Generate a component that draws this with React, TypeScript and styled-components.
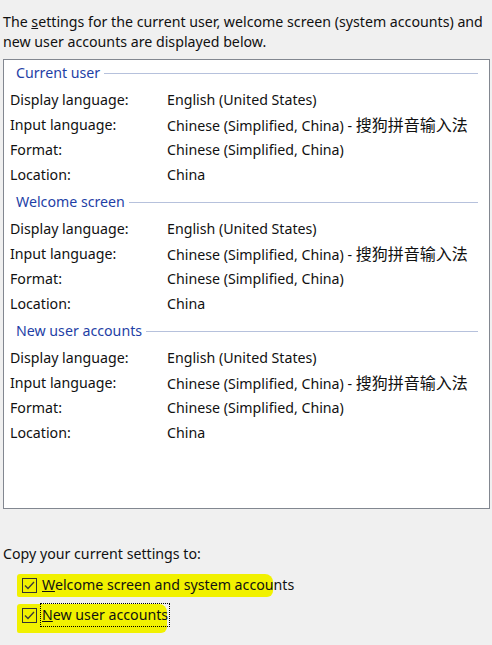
import styled, { createGlobalStyle } from "styled-components";

// ── palette ──────────────────────────────────────────────────────────────────
const FACE = "#F0F0F0";
const PANEL_BORDER = "#828790";
const GROUP_BLUE = "#1F3FA6";
const GROUP_LINE = "#B6C1DC";
const TEXT = "#111111";
const MARKER = "#F1F100";

type Row = { label: string; value: string; ime?: string };

const SECTIONS: { title: string; rows: Row[] }[] = [
  "Current user",
  "Welcome screen",
  "New user accounts",
].map(title => ({
  title,
  rows: [
    { label: "Display language:", value: "English (United States)" },
    { label: "Input language:", value: "Chinese (Simplified, China) - ", ime: "搜狗拼音输入法" },
    { label: "Format:", value: "Chinese (Simplified, China)" },
    { label: "Location:", value: "China" },
  ],
}));

const Global = createGlobalStyle`
  html, body {
    margin: 0;
    padding: 0;
    background: ${FACE};
  }
  body {
    font-family: "Noto Sans", "Noto Sans CJK SC", sans-serif;
    font-size: 14.2px;
    color: ${TEXT};
  }
`;

// ── styled components ────────────────────────────────────────────────────────
const Page = styled.div`
  width: 492px;
  height: 645px;
  display: flex;
  flex-direction: column;
  overflow: hidden;
`;

const Intro = styled.p`
  margin: 0;
  padding: 12px 3px 0;
  line-height: 20px;
`;

const Mnemonic = styled.span`
  text-decoration: underline;
`;

const Panel = styled.div`
  margin: 7px 0 0 3px;
  width: 485px;
  height: 448px;
  background: #fff;
  border: 1px solid ${PANEL_BORDER};
  display: flex;
  flex-direction: column;
`;

const Section = styled.section`
  display: flex;
  flex-direction: column;
  padding-bottom: 2px;
`;

const GroupHead = styled.div`
  display: flex;
  align-items: center;
  gap: 4px;
  height: 25px;
  margin-bottom: 2px;
  padding: 0 11px 0 12px;
`;

const GroupTitle = styled.span`
  color: ${GROUP_BLUE};
  white-space: nowrap;
`;

const GroupRule = styled.span`
  flex: 1;
  height: 1px;
  background: ${GROUP_LINE};
  margin-top: 1px;
`;

const InfoRow = styled.div`
  display: grid;
  grid-template-columns: 157px 1fr;
  height: 25px;
  line-height: 25px;
  padding-left: 6px;
  white-space: nowrap;
`;

const Ime = styled.span`
  font-family: "Noto Sans CJK SC", sans-serif;
  font-size: 16px;
`;

const CopyBlock = styled.div`
  display: flex;
  flex-direction: column;
  padding: 35px 0 0 3px;
`;

const CopyLabel = styled.div`
  line-height: 20px;
  margin-bottom: 6px;
`;

const CheckRow = styled.label`
  position: relative;
  display: flex;
  align-items: center;
  gap: 4px;
  height: 30px;
  padding-left: 19px;
`;

const Marker = styled.span<{ $w: number; $top: number; $h: number }>`
  position: absolute;
  left: 14px;
  top: ${p => p.$top}px;
  width: ${p => p.$w}px;
  height: ${p => p.$h}px;
  background: ${MARKER};
  border-radius: 3px 8px 6px 2px;
`;

const Box = styled.span`
  position: relative;
  width: 13px;
  height: 13px;
  border: 1px solid #333;
  display: flex;
  align-items: center;
  justify-content: center;
`;

const Caption = styled.span<{ $focus?: boolean }>`
  position: relative;
  line-height: 22px;
  padding: 0 1px;
  outline: ${p => (p.$focus ? "1px dotted #000" : "none")};
  outline-offset: 0;
`;

function Check() {
  return (
    <svg width="11" height="9" viewBox="0 0 11 9">
      <path d="M1 4.5 L4 7.5 L10 1" fill="none" stroke="#3a3a3a" strokeWidth="1.3" />
    </svg>
  );
}

export default function App() {
  return (
    <Page>
      <Global />
      <Intro>
        The <Mnemonic>s</Mnemonic>ettings for the current user, welcome screen (system accounts) and new
        user accounts are displayed below.
      </Intro>

      <Panel>
        {SECTIONS.map(s => (
          <Section key={s.title}>
            <GroupHead>
              <GroupTitle>{s.title}</GroupTitle>
              <GroupRule />
            </GroupHead>
            {s.rows.map(r => (
              <InfoRow key={r.label}>
                <span>{r.label}</span>
                <span>
                  {r.value}
                  {r.ime && <Ime>{r.ime}</Ime>}
                </span>
              </InfoRow>
            ))}
          </Section>
        ))}
      </Panel>

      <CopyBlock>
        <CopyLabel>Copy your current settings to:</CopyLabel>
        <CheckRow>
          <Marker $w={256} $top={4} $h={23} />
          <Box>
            <Check />
          </Box>
          <Caption>
            <Mnemonic>W</Mnemonic>elcome screen and system accounts
          </Caption>
        </CheckRow>
        <CheckRow>
          <Marker $w={150} $top={4} $h={29} />
          <Box>
            <Check />
          </Box>
          <Caption $focus>
            <Mnemonic>N</Mnemonic>ew user accounts
          </Caption>
        </CheckRow>
      </CopyBlock>
    </Page>
  );
}
